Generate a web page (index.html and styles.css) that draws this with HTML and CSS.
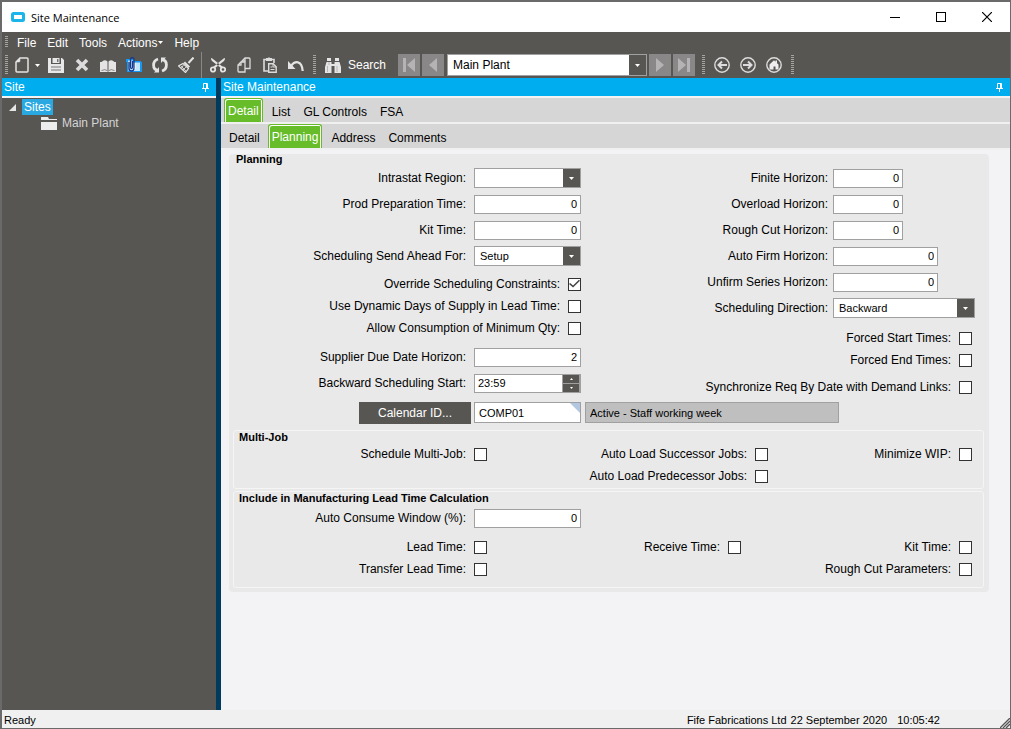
FILE: index.html
```html
<!DOCTYPE html>
<html lang="en">
<head>
    <meta charset="UTF-8">
    <meta name="viewport" content="width=device-width, initial-scale=1.0">
    <title>Site Maintenance</title>
    <link rel="stylesheet" href="styles.css">
</head>
<body>
    <header class="titlebar">
        <svg class="app-icon" width="14" height="10" viewBox="0 0 14 10"><rect x="1.5" y="1.5" width="11" height="7" rx="1" fill="#fff" stroke="#1bb5ea" stroke-width="3"/></svg>
        <h1>Site Maintenance</h1>
        <div class="window-buttons">
            <button aria-label="Minimize"><svg width="10" height="10"><path d="M0 5.5h10" stroke="#000"/></svg></button>
            <button aria-label="Maximize"><svg width="10" height="10"><rect x=".5" y=".5" width="9" height="9" fill="none" stroke="#000"/></svg></button>
            <button aria-label="Close"><svg width="10" height="10"><path d="M0 0l10 10M10 0L0 10" stroke="#000" stroke-width="1.2"/></svg></button>
        </div>
    </header>

    <nav class="menubar">
        <span class="grip"></span>
        <button>File</button>
        <button>Edit</button>
        <button>Tools</button>
        <button>Actions<svg width="5" height="3"><path d="M0 0h5L2.5 3z" fill="#fff"/></svg></button>
        <button>Help</button>
    </nav>

    <div class="toolbar">
        <span class="grip"></span>
        <button class="tool new" aria-label="New">
            <svg width="14" height="16" viewBox="0 0 14 16" fill="none" stroke="#e4e4e4" stroke-width="1.5"><path d="M5 1h7q1 0 1 1v12q0 1-1 1H2q-1 0-1-1V5z"/><path d="M1 5l4-4v3q0 1-1 1z" fill="#e4e4e4" stroke-width=".5"/></svg>
            <svg width="5" height="3"><path d="M0 0h5L2.5 3z" fill="#fff"/></svg>
        </button>
        <button class="tool" aria-label="Save"><svg width="16" height="15" viewBox="0 0 16 15"><path d="M0 0h3v6h10V0h1l2 2v13H0z" fill="#e8e8e8"/><path d="M4.5 0h7v5h-7z" fill="#e8e8e8"/><path d="M9 1h1.500v3H9zM3 8.500h10v1H3zM3 11.500h10v1H3z" fill="#777"/></svg></button>
        <button class="tool" aria-label="Delete"><svg width="14" height="14" viewBox="0 0 14 14"><path d="M2 2l10 10M12 2L2 12" stroke="#dcdcdc" stroke-width="3.6"/></svg></button>
        <button class="tool" aria-label="Notes"><svg width="16" height="13" viewBox="0 0 16 13"><path d="M0 13V3h1.500Q4.500 0 7.500 2.500V11Q8 11.500 8.500 11V2.500Q11.500 0 14.500 3H16v10H9q-1-.8-2 0z" fill="#e4e4e4"/><path d="M1.500 11.500Q5 9.500 8 12q3-2.500 6.500-.5" fill="none" stroke="#8a8886"/></svg></button>
        <button class="tool" aria-label="Attachments"><svg width="16" height="16" viewBox="0 0 16 16"><path d="M0 2h8v2h7v1h1v10H1V5H0z" fill="#1597f2"/><path d="M2 3.500h5v2h7V14H2.500z" fill="#c4e5ff"/><path d="M8.500 6v6" stroke="#fff" stroke-width="2"/><path d="M3 5v6q0 3 2.500 3T8 11V3Q8 .7 6.200.7T4.500 3v7q0 1.500 1 1.500t1-1.500V4" fill="none" stroke="#173b8c" stroke-width="1.300"/></svg></button>
        <button class="tool" aria-label="Refresh"><svg width="16" height="16" viewBox="0 0 16 16" fill="none" stroke="#e4e4e4" stroke-width="2.800"><path d="M6 2Q1.600 3.500 1.600 8T5 13M10 14q4.400-1.500 4.400-6T11 3"/><path d="M2 15.500h5V10zM14 .5H9V6z" fill="#e4e4e4" stroke="none"/></svg></button>
        <button class="tool" aria-label="Clear"><svg width="16" height="16" viewBox="0 0 16 16"><path d="M15.500.5L10.500 6" stroke="#e4e4e4" stroke-width="2"/><path d="M7 4.500l5 5-1.500 1.500-5-5z" fill="#e4e4e4"/><path d="M5 6.500l5.500 5L7.500 15.500.5 9z" fill="none" stroke="#e4e4e4" stroke-width="1.200"/><path d="M3 9l5 5M5.500 8l-2 3M8 10l-3 3" stroke="#e4e4e4" stroke-width=".8"/></svg></button>
        <span class="separator"></span>
        <button class="tool" aria-label="Cut"><svg width="16" height="15" viewBox="0 0 16 15"><path d="M1 0q1 0 2 1l10 8-1.500 1.500L2 3Q1 2 1 0zM15 0q-1 0-2 1L3 9l1.500 1.500L14 3q1-1 1-3z" fill="#e4e4e4"/><g fill="none" stroke="#e4e4e4" stroke-width="1.800"><circle cx="3" cy="11.500" r="2.200"/><circle cx="13" cy="11.500" r="2.200"/></g></svg></button>
        <button class="tool" aria-label="Copy"><svg width="14" height="16" viewBox="0 0 14 16" fill="#585653" stroke="#dcdcdc" stroke-width="1.300"><path d="M8 1h4q1 0 1 1v9.500H5V4z"/><path d="M5 5h3v10H2q-1 0-1-1V8l3-3z"/><path d="M1 8h3V5M5 4h3V1" fill="none"/></svg></button>
        <button class="tool" aria-label="Paste"><svg width="14" height="16" viewBox="0 0 14 16"><path d="M5 14H1V2.500h10V6" fill="none" stroke="#dcdcdc" stroke-width="1.600"/><path d="M3 1h2q1-1.500 2 0h2v3H3z" fill="#dcdcdc"/><path d="M5.700 6.700h4.500l3 3v5.600H5.700z" fill="#585653" stroke="#dcdcdc" stroke-width="1.400"/><path d="M10 7v3h3M7.500 10h2M7.500 12.500h4" stroke="#dcdcdc" fill="none"/></svg></button>
        <button class="tool" aria-label="Undo"><svg width="16" height="11" viewBox="0 0 16 11"><path d="M3 6Q6 1.500 10 2.300T14.700 11" fill="none" stroke="#e4e4e4" stroke-width="2.200"/><path d="M0 1v8h7.500z" fill="#e4e4e4"/></svg></button>
        <span class="grip"></span>
        <button class="search"><svg width="16" height="15" viewBox="0 0 16 15"><path d="M2 0h4v3H2zM10 0h4v3h-4zM1.500 4h5v2h3V4h5L16 9v6H9.500V8h-3v7H0V9z" fill="#e4e4e4"/><path d="M2.500 8v6M12 8v6M4 4v3" stroke="#aaa" stroke-width=".8"/></svg>Search</button>
        <button class="step" aria-label="First"><svg width="14" height="14"><path d="M1 0h3v14H1zM13 0v14L5 7z" fill="#b5b3b4"/></svg></button>
        <button class="step" aria-label="Previous"><svg width="14" height="14"><path d="M11 0v14L3 7z" fill="#b5b3b4"/></svg></button>
        <span class="combo site-combo">
            <select aria-label="Site"><option>Main Plant</option></select>
            <svg class="arrow" viewBox="0 0 17 18"><path d="M6 8h5L8.500 11z" fill="#fff"/></svg>
        </span>
        <button class="step" aria-label="Next"><svg width="14" height="14"><path d="M3 0v14l8-7z" fill="#b5b3b4"/></svg></button>
        <button class="step" aria-label="Last"><svg width="14" height="14"><path d="M10 0h3v14h-3zM1 0v14l8-7z" fill="#b5b3b4"/></svg></button>
        <span class="grip"></span>
        <button class="tool" aria-label="Back"><svg width="16" height="16" fill="none" stroke="#dcdcdc"><circle cx="8" cy="8" r="7.200" stroke-width="1.400"/><path d="M4 8h9M8 4.500L4.500 8 8 11.500" stroke-width="2"/></svg></button>
        <button class="tool" aria-label="Forward"><svg width="16" height="16" fill="none" stroke="#dcdcdc"><circle cx="8" cy="8" r="7.200" stroke-width="1.400"/><path d="M12 8H3M8 4.500L11.500 8 8 11.500" stroke-width="2"/></svg></button>
        <button class="tool" aria-label="Home"><svg width="16" height="16"><circle cx="8" cy="8" r="7.200" fill="none" stroke="#dcdcdc" stroke-width="1.400"/><path d="M3.500 7.500L8 3.200l1.500 1.500V3.500H11v2.700l1.500 1.300v5h-3v-3h-2v3h-4z" fill="#eee"/></svg></button>
        <span class="grip"></span>
    </div>

    <div class="workspace">
        <aside class="sidebar">
            <h2 class="panel-title">Site
                <svg width="7" height="9"><path d="M1.500 5V.5h4V5M4.500 0v5M0 5.500h7M3.500 6v3" stroke="#fff" fill="none"/></svg>
            </h2>
            <ul class="tree">
                <li><svg class="expander" width="7" height="7"><path d="M7 0v7H0z" fill="#e6e6e6"/></svg><a href="#" class="selected">Sites</a>
                    <ul>
                        <li><svg class="folder" width="16" height="13"><path d="M0 0h7l1 2h8v1H0zM0 5h16v8H0z" fill="#ececec"/></svg><a href="#">Main Plant</a></li>
                    </ul>
                </li>
            </ul>
        </aside>

        <main class="content">
            <h2 class="panel-title">Site Maintenance
                <svg width="7" height="9"><path d="M1.500 5V.5h4V5M4.500 0v5M0 5.500h7M3.500 6v3" stroke="#fff" fill="none"/></svg>
            </h2>
            <div class="tabs">
                <button class="active">Detail</button>
                <button>List</button>
                <button>GL Controls</button>
                <button>FSA</button>
            </div>
            <div class="tabs">
                <button>Detail</button>
                <button class="active">Planning</button>
                <button>Address</button>
                <button>Comments</button>
            </div>

            <form class="planning">
                <h3>Planning</h3>
                <div class="columns">
                    <div class="column left">
                        <div class="row">
                            <label for="intrastat">Intrastat Region:</label>
                            <span class="combo field"><select id="intrastat"><option></option></select><svg class="arrow" viewBox="0 0 17 18"><path d="M6 8h5L8.500 11z" fill="#fff"/></svg></span>
                        </div>
                        <div class="row"><label for="prep">Prod Preparation Time:</label><input class="field number" id="prep" value="0"></div>
                        <div class="row"><label for="kit">Kit Time:</label><input class="field number" id="kit" value="0"></div>
                        <div class="row">
                            <label for="ahead">Scheduling Send Ahead For:</label>
                            <span class="combo field"><select id="ahead"><option>Setup</option></select><svg class="arrow" viewBox="0 0 17 18"><path d="M6 8h5L8.500 11z" fill="#fff"/></svg></span>
                        </div>
                        <div class="checks">
                            <div class="check"><label for="override">Override Scheduling Constraints:</label><input type="checkbox" id="override" checked></div>
                            <div class="check"><label for="dynamic">Use Dynamic Days of Supply in Lead Time:</label><input type="checkbox" id="dynamic"></div>
                            <div class="check"><label for="minimum">Allow Consumption of Minimum Qty:</label><input type="checkbox" id="minimum"></div>
                        </div>
                        <div class="row"><label for="supplier">Supplier Due Date Horizon:</label><input class="field number" id="supplier" value="2"></div>
                        <div class="row">
                            <label for="start">Backward Scheduling Start:</label>
                            <span class="spinner field">
                                <input id="start" value="23:59">
                                <span class="spin-buttons">
                                    <button type="button" aria-label="Later"><svg width="3" height="2"><path d="M0 2h3L1.500 0z" fill="#fff"/></svg></button>
                                    <button type="button" aria-label="Earlier"><svg width="3" height="2"><path d="M0 0h3L1.500 2z" fill="#fff"/></svg></button>
                                </span>
                            </span>
                        </div>
                    </div>

                    <div class="column right">
                        <div class="row"><label for="finite">Finite Horizon:</label><span class="slot"><input class="field number short" id="finite" value="0"></span></div>
                        <div class="row"><label for="overload">Overload Horizon:</label><span class="slot"><input class="field number short" id="overload" value="0"></span></div>
                        <div class="row"><label for="rough">Rough Cut Horizon:</label><span class="slot"><input class="field number short" id="rough" value="0"></span></div>
                        <div class="row"><label for="firm">Auto Firm Horizon:</label><span class="slot"><input class="field number" id="firm" value="0"></span></div>
                        <div class="row"><label for="unfirm">Unfirm Series Horizon:</label><span class="slot"><input class="field number" id="unfirm" value="0"></span></div>
                        <div class="row">
                            <label for="direction">Scheduling Direction:</label>
                            <span class="slot"><span class="combo field wide"><select id="direction"><option>Backward</option></select><svg class="arrow" viewBox="0 0 17 18"><path d="M6 8h5L8.500 11z" fill="#fff"/></svg></span></span>
                        </div>
                        <div class="checks">
                            <div class="check"><label for="forced-start">Forced Start Times:</label><input type="checkbox" id="forced-start"></div>
                            <div class="check"><label for="forced-end">Forced End Times:</label><input type="checkbox" id="forced-end"></div>
                        </div>
                        <div class="check"><label for="sync">Synchronize Req By Date with Demand Links:</label><input type="checkbox" id="sync"></div>
                    </div>
                </div>

                <div class="calendar">
                    <button type="button">Calendar ID...</button>
                    <span class="lookup"><input class="field" aria-label="Calendar ID" value="COMP01"></span>
                    <input class="field description" aria-label="Calendar description" value="Active - Staff working week" readonly>
                </div>

                <section class="group multi-job">
                    <h3>Multi-Job</h3>
                    <div class="check-grid">
                        <div class="check"><label for="multi">Schedule Multi-Job:</label><input type="checkbox" id="multi"></div>
                        <div class="check"><label for="successor">Auto Load Successor Jobs:</label><input type="checkbox" id="successor"></div>
                        <div class="check"><label for="wip">Minimize WIP:</label><input type="checkbox" id="wip"></div>
                        <div class="check second"><label for="predecessor">Auto Load Predecessor Jobs:</label><input type="checkbox" id="predecessor"></div>
                    </div>
                </section>

                <section class="group lead-time">
                    <h3>Include in Manufacturing Lead Time Calculation</h3>
                    <div class="row"><label for="consume">Auto Consume Window (%):</label><input class="field number" id="consume" value="0"></div>
                    <div class="check-grid">
                        <div class="check"><label for="lead">Lead Time:</label><input type="checkbox" id="lead"></div>
                        <div class="check"><label for="receive">Receive Time:</label><input type="checkbox" id="receive"></div>
                        <div class="check"><label for="include-kit">Kit Time:</label><input type="checkbox" id="include-kit"></div>
                        <div class="check"><label for="transfer">Transfer Lead Time:</label><input type="checkbox" id="transfer"></div>
                        <div class="check third"><label for="parameters">Rough Cut Parameters:</label><input type="checkbox" id="parameters"></div>
                    </div>
                </section>
            </form>
        </main>
    </div>

    <footer class="statusbar">
        <span>Ready</span>
        <span class="company">Fife Fabrications Ltd</span>
        <span>22 September 2020</span>
        <span class="clock">10:05:42</span>
        <svg width="10" height="10"><path d="M0 10L10 0M3 10l7-7M6 10l4-4" stroke="#555" stroke-width="1.300"/></svg>
    </footer>
</body>
</html>
```
FILE: styles.css
```css
/* General styles */
* {
    box-sizing: border-box;
}

body {
    margin: 0;
    min-height: 100vh;
    display: flex;
    flex-direction: column;
    border: 2px solid #6a6a6a;
    border-width: 2px 1px 1px 2px;
    font-family: "Liberation Sans", Arial, sans-serif;
    font-size: 12px;
    color: #000;
    background-color: #f3f3f6;
}

h1, h2, h3, ul {
    margin: 0;
    padding: 0;
}

button, input, select {
    font: inherit;
    color: inherit;
    margin: 0;
    padding: 0;
    border: none;
    border-radius: 0;
    background: none;
}

svg {
    display: block;
    flex: none;
}

/* Title bar */
.titlebar {
    display: flex;
    align-items: center;
    height: 30px;
    padding-left: 9px;
    gap: 6px;
    background-color: #fff;
}

.titlebar h1 {
    font-family: "Open Sans", sans-serif;
    font-size: 11px;
    font-weight: normal;
}

.window-buttons {
    display: flex;
    margin-left: auto;
}

.window-buttons button {
    width: 46px;
    height: 30px;
    display: grid;
    place-items: center;
}

/* Menu and toolbar */
.menubar, .toolbar {
    display: flex;
    align-items: center;
    color: #fff;
    background-color: #585653;
}

.menubar {
    height: 20px;
    gap: 1px;
    padding-left: 3px;
}

.menubar button {
    display: flex;
    align-items: center;
    gap: 1px;
    padding: 1px 5px 0;
}

.menubar .grip {
    height: 12px;
    margin-right: 3px;
}

.toolbar {
    height: 26px;
    padding-left: 3px;
}

.grip {
    flex: none;
    width: 3px;
    height: 20px;
    background: repeating-linear-gradient(#a5a4a2 0 1px, transparent 1px 2px);
}

.tool {
    flex: none;
    width: 26px;
    height: 26px;
    display: flex;
    align-items: center;
    justify-content: center;
}

.tool.new {
    width: 35px;
    gap: 6px;
    padding-left: 4px;
}

.separator {
    width: 1px;
    height: 26px;
    margin: 0 3px 0 2px;
    background-color: #8a8886;
}

.tool + .grip {
    margin-left: 4px;
}

.grip + .tool:not(.new) {
    margin-left: 4px;
}

.search {
    display: flex;
    align-items: center;
    gap: 7px;
    margin: 0 12px 0 9px;
}

.step {
    flex: none;
    display: grid;
    place-items: center;
    width: 22px;
    height: 22px;
    margin-right: 2px;
    background-color: #8a8788;
}

.step + .grip {
    margin-left: 5px;
}

/* Drop-downs */
.combo {
    position: relative;
    display: flex;
    border: 1px solid #a0a0a0;
    background-color: #fff;
}

.combo select {
    flex: 1;
    width: 100%;
    padding: 0 22px 0 5px;
    appearance: none;
    color: #000;
    font-size: 11px;
}

.combo .arrow {
    position: absolute;
    top: 0;
    right: 0;
    width: 17px;
    height: 100%;
    background-color: #585653;
    pointer-events: none;
}

.site-combo {
    width: 200px;
    height: 22px;
    margin: 0 2px 0 1px;
}

.site-combo select {
    font-size: 12px;
}

/* Panels */
.workspace {
    flex: 1;
    display: flex;
}

.panel-title {
    display: flex;
    align-items: center;
    justify-content: space-between;
    height: 20px;
    padding: 0 7px 0 2px;
    border-bottom: 2px solid #f3f3f3;
    font-size: 12px;
    font-weight: normal;
    color: #fff;
    background-color: #00adef;
}

.sidebar {
    flex: none;
    width: 219px;
    border-right: 5px solid #003a5c;
    background-color: #585653;
}

.tree, .tree ul {
    list-style: none;
}

.tree {
    padding: 1px 7px;
}

.tree li {
    position: relative;
}

.tree a {
    display: inline-block;
    height: 16px;
    line-height: 16px;
    margin-left: 13px;
    padding: 0 2px;
    color: #d4d4d4;
    text-decoration: none;
    vertical-align: top;
}

.tree a.selected {
    color: #fff;
    background-color: #29a8e2;
}

.tree .expander {
    position: absolute;
    top: 5px;
    left: 0;
}

.tree .folder {
    position: absolute;
    top: 2px;
    left: 0;
}

.tree ul {
    padding-left: 32px;
}

.tree ul a {
    margin-left: 19px;
}

.content {
    flex: 1;
    min-width: 0;
}

/* Tabs */
.tabs {
    display: flex;
    height: 26px;
    padding-left: 1px;
    border-bottom: 2px solid #f0f0f0;
    background-color: #d6d6d6;
}

.tabs button {
    padding: 4px 6px 0 7px;
}

.tabs .active {
    margin: 0 2px;
    padding: 0 3px;
    border: 1px solid #66bc29;
    border-bottom: none;
    border-radius: 3px 3px 0 0;
    box-shadow: inset 1px 1px #fff, inset -1px 0 #fff;
    color: #fff;
    background-color: #66bc29;
}

/* Planning form */
.planning {
    margin: 4px 21px 0 8px;
    padding: 0 5px 4px 4px;
    border-radius: 4px;
    background-color: #e9e9e9;
}

h3 {
    padding-left: 3px;
    font-size: 11px;
    line-height: 11px;
}

.columns {
    display: flex;
    justify-content: space-between;
    padding-right: 9px;
}

.column.left {
    width: 348px;
}

.row {
    display: flex;
    align-items: center;
    justify-content: flex-end;
    gap: 8px;
    height: 26px;
}

.right .row {
    gap: 5px;
}

.slot {
    display: flex;
    width: 142px;
}

.field {
    width: 107px;
    height: 19px;
    padding: 0 4px;
    border: 1px solid #a0a0a0;
    font-size: 11px;
    background-color: #fff;
}

.combo.field {
    height: 20px;
    padding: 0;
}

.right .field {
    width: 105px;
}

.right .short {
    width: 70px;
}

.right .wide {
    width: 142px;
}

.number {
    padding: 0 3px;
    text-align: right;
}

.spinner {
    display: flex;
    padding: 0;
}

.spinner input {
    flex: 1;
    min-width: 0;
    padding-left: 3px;
}

.spin-buttons {
    display: flex;
    flex-direction: column;
    gap: 1px;
    width: 18px;
    padding: 0 1px;
    background-color: #a0a0a0;
}

.spin-buttons button {
    flex: 1;
    display: grid;
    place-items: center;
    background-color: #585653;
}

.checks {
    padding: 4px 0 5px;
}

.check {
    display: flex;
    align-items: center;
    justify-content: flex-end;
    gap: 8px;
    height: 22px;
}

.right .checks {
    padding-top: 6px;
}

.right .check {
    padding-right: 3px;
}

input[type="checkbox"] {
    position: relative;
    width: 13px;
    height: 13px;
    appearance: none;
    border: 1px solid #333;
    background-color: #fff;
}

input[type="checkbox"]:checked::after {
    content: "";
    position: absolute;
    inset: 1px 0;
    background-color: #444;
    clip-path: polygon(0 50%, 10% 40%, 37% 67%, 90% 4%, 100% 14%, 37% 90%);
}

/* Calendar row */
.calendar {
    display: flex;
    gap: 3px;
    height: 22px;
    margin: 4px 0 6px 126px;
}

.calendar button {
    width: 112px;
    color: #fff;
    background-color: #585653;
}

.calendar .field {
    height: 21px;
}

.lookup {
    position: relative;
}

.lookup::after {
    content: "";
    position: absolute;
    top: 1px;
    right: 1px;
    width: 10px;
    height: 10px;
    background-color: #b4c7e1;
    clip-path: polygon(0 0, 100% 0, 100% 100%);
}

.calendar .description {
    width: 254px;
    margin-left: 1px;
    background-color: #bfbfbf;
}

/* Inner groups */
.group {
    padding: 1px 11px 0 2px;
    border: 1px solid #f5f5f5;
    border-radius: 3px;
}

.check-grid {
    display: grid;
}

.multi-job {
    height: 59px;
    margin-bottom: 2px;
}

.multi-job .check-grid {
    grid-template-columns: 251px 281px 1fr;
}

.multi-job .second {
    grid-column: 2;
}

.lead-time {
    height: 97px;
}

.lead-time .row {
    width: 345px;
    margin-top: 1px;
}

.lead-time .check-grid {
    grid-template-columns: 251px 254px 1fr;
    margin-top: 5px;
}

.lead-time .third {
    grid-column: 3;
}

/* Status bar */
.statusbar {
    display: flex;
    align-items: center;
    height: 18px;
    padding: 1px 0 0 2px;
    font-size: 11px;
    background-color: #f0f0f0;
}

.company {
    margin: 0 4px 0 auto;
}

.clock {
    margin: 0 60px 0 10px;
}

.statusbar svg {
    align-self: flex-end;
}
```
